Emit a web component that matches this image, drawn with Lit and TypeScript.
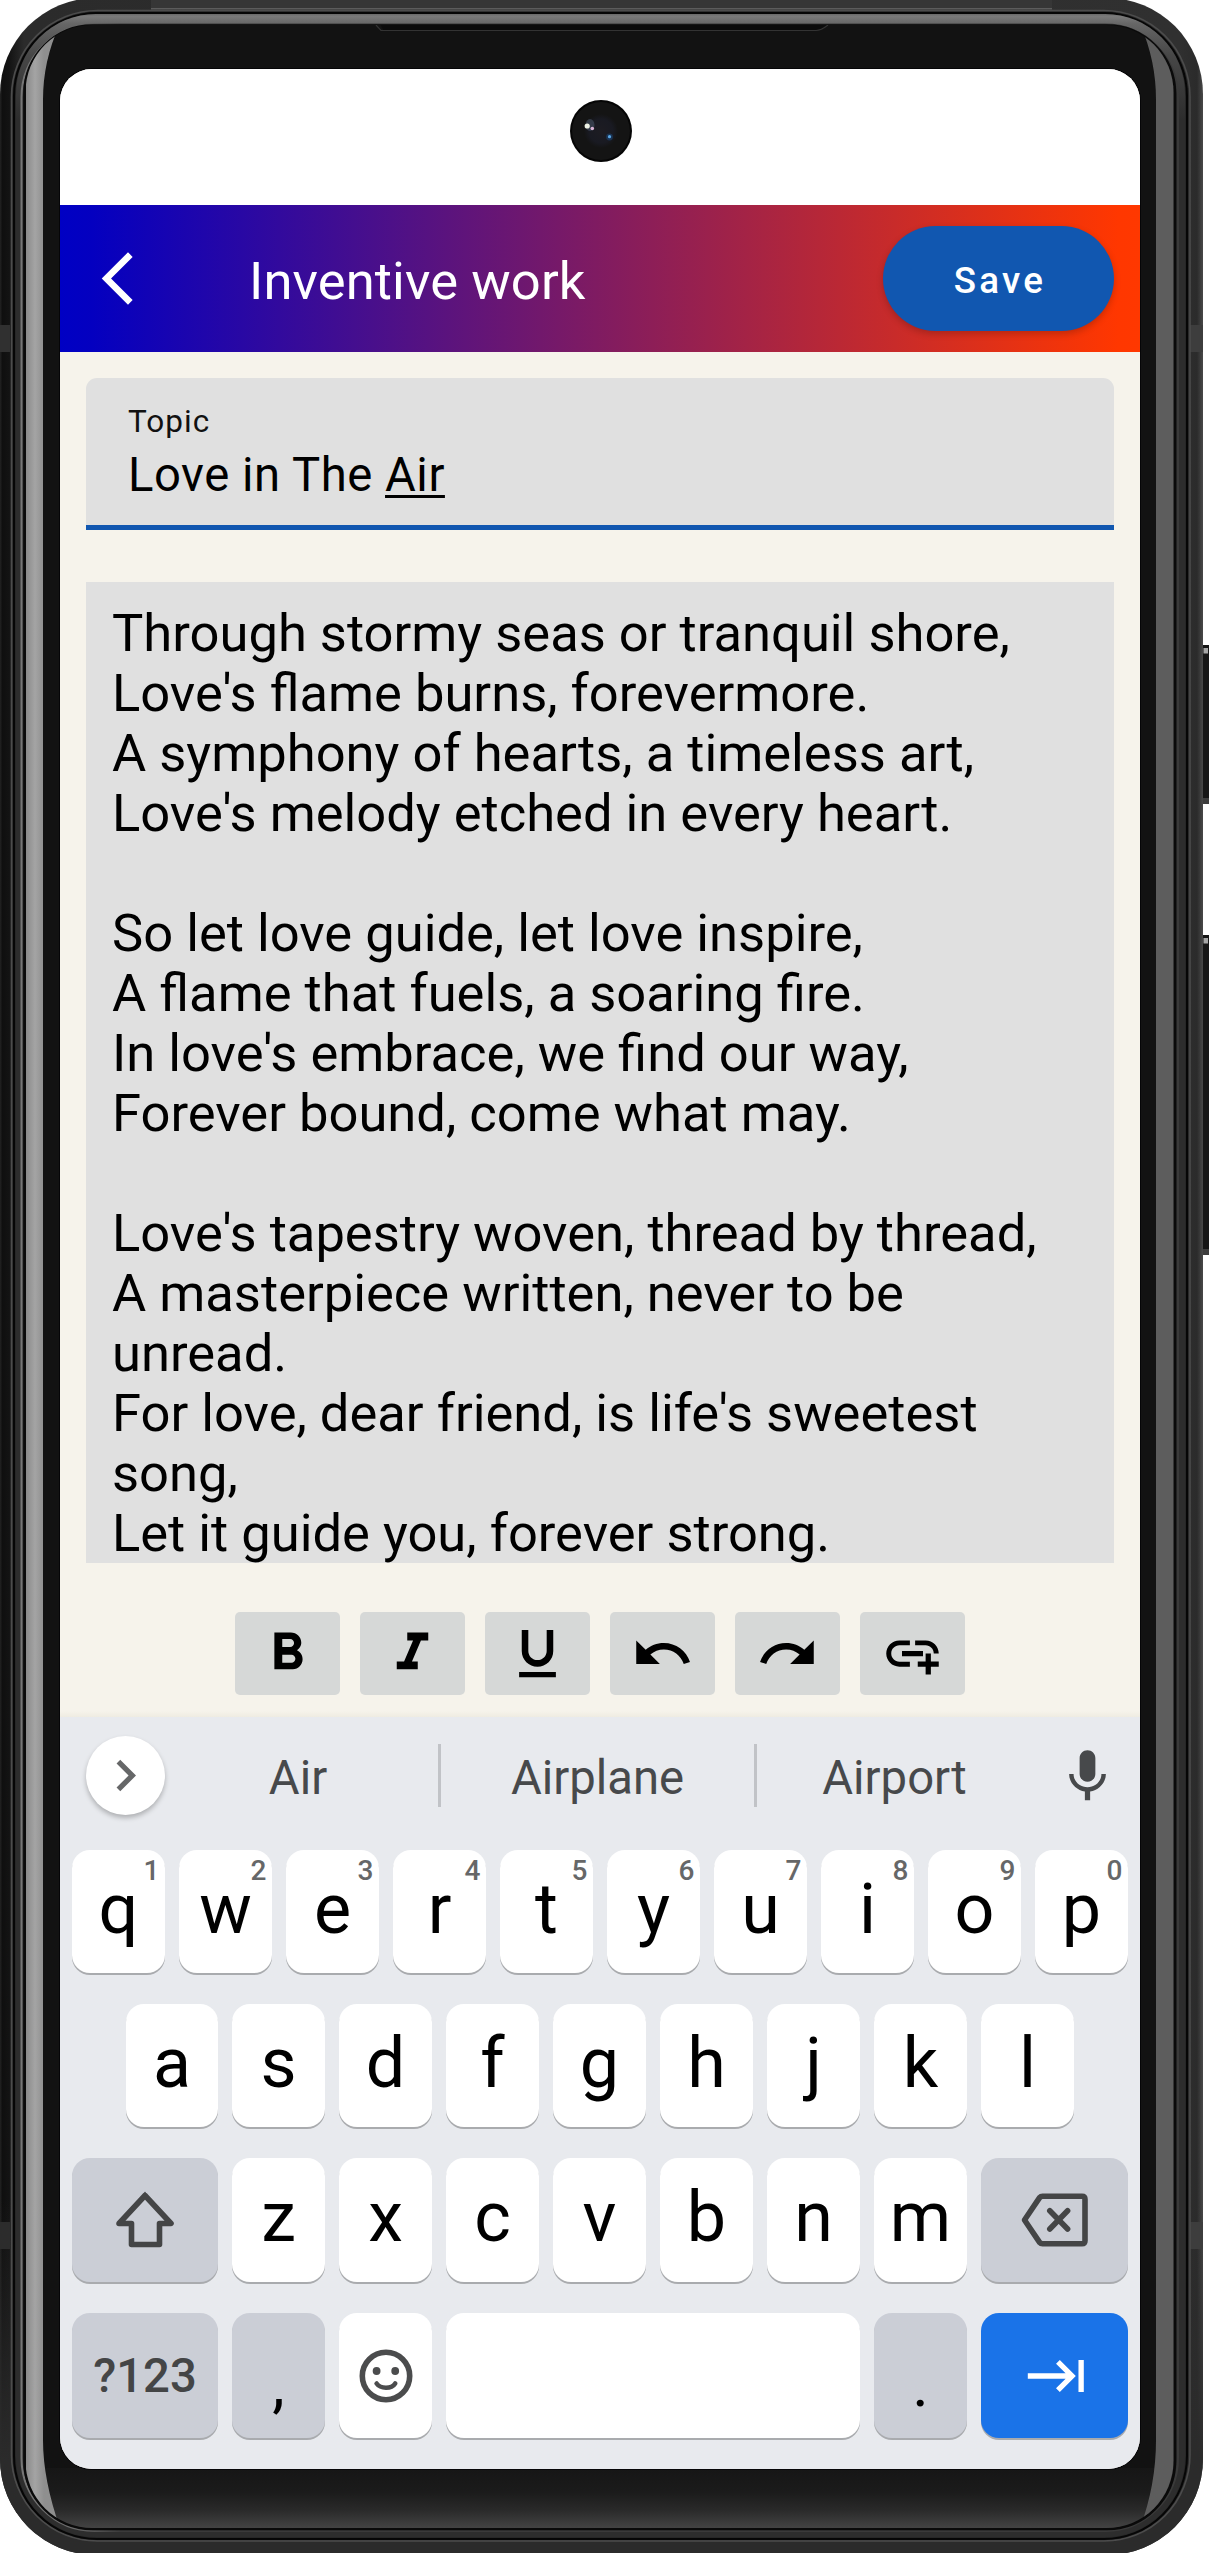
import { LitElement, html, css, svg } from "lit";
import { customElement, property } from "lit/decorators.js";
import { classMap } from "lit/directives/class-map.js";

const POEM = [
  "Through stormy seas or tranquil shore,",
  "Love's flame burns, forevermore.",
  "A symphony of hearts, a timeless art,",
  "Love's melody etched in every heart.",
  "",
  "So let love guide, let love inspire,",
  "A flame that fuels, a soaring fire.",
  "In love's embrace, we find our way,",
  "Forever bound, come what may.",
  "",
  "Love's tapestry woven, thread by thread,",
  "A masterpiece written, never to be",
  "unread.",
  "For love, dear friend, is life's sweetest",
  "song,",
  "Let it guide you, forever strong.",
];

const ICONS: Record<string, string> = {
  back: "M17.77 3.77L16 2 6 12l10 10 1.77-1.77L9.54 12z",
  chevron: "M10 6L8.59 7.41 13.17 12l-4.58 4.59L10 18l6-6z",
  bold: "M15.6 10.79c.97-.67 1.65-1.77 1.65-2.79 0-2.26-1.75-4-4-4H7v14h7.04c2.09 0 3.71-1.7 3.71-3.79 0-1.52-.86-2.82-2.15-3.42zM10 6.5h3c.83 0 1.5.67 1.5 1.5s-.67 1.5-1.5 1.5h-3v-3zm3.5 9H10v-3h3.5c.83 0 1.5.67 1.5 1.5s-.67 1.5-1.5 1.5z",
  italic: "M10 4v3h2.21l-3.42 8H6v3h8v-3h-2.21l3.42-8H18V4z",
  underline: "M12 17c3.31 0 6-2.69 6-6V3h-2.5v8c0 1.93-1.57 3.5-3.5 3.5S8.5 12.93 8.5 11V3H6v8c0 3.31 2.69 6 6 6zm-7 2v2h14v-2H5z",
  undo: "M12.5 8c-2.65 0-5.05.99-6.9 2.6L2 7v9h9l-3.62-3.62c1.39-1.16 3.16-1.88 5.12-1.88 3.54 0 6.55 2.31 7.6 5.5l2.37-.78C21.08 11.03 17.15 8 12.5 8z",
  redo: "M18.4 10.6C16.55 8.99 14.15 8 11.5 8c-4.65 0-8.58 3.03-9.96 7.22L3.9 16c1.05-3.19 4.05-5.5 7.6-5.5 1.95 0 3.73.72 5.12 1.88L13 16h9V7l-3.6 3.6z",
  link: "M8 11h8v2H8zm12.1 1H22c0-2.76-2.24-5-5-5h-4v1.9h4c1.71 0 3.1 1.39 3.1 3.1zM3.9 12c0-1.71 1.39-3.1 3.1-3.1h4V7H7c-2.76 0-5 2.24-5 5s2.24 5 5 5h4v-1.9H7c-1.71 0-3.1-1.39-3.1-3.1zM19 12h-2v3h-3v2h3v3h2v-3h3v-2h-3z",
  mic: "M12 14c1.66 0 2.99-1.34 2.99-3L15 5c0-1.66-1.34-3-3-3S9 3.34 9 5v6c0 1.66 1.34 3 3 3zm5.3-3c0 3-2.54 5.1-5.3 5.1S6.7 14 6.7 11H5c0 3.41 2.72 6.23 6 6.72V21h2v-3.28c3.28-.48 6-3.3 6-6.72h-1.7z",
  tab: "M11.59 7.41L15.17 11H1v2h14.17l-3.59 3.59L13 18l6-6-6-6-1.41 1.41zM20 6v12h2V6h-2z",
};

const icon = (name: string) =>
  html`<svg class="icon" viewBox="0 0 24 24" width="63" height="63"><path fill="currentColor" d=${ICONS[name]} /></svg>`;

const tabIcon = html`<svg width="66" height="64" viewBox="-1 0 24.4 24"><path fill="currentColor" d=${ICONS.tab} /></svg>`;

const shiftIcon = html`<svg width="60" height="58" viewBox="0 0 60 58">
  <path d="M30 4.5L56 32.5H44.5V53.5H16.5V32.5H4Z" fill="none" stroke="#444546" stroke-width="5.6" stroke-linejoin="round" />
  <path d="M26 6.5L30 .6L34 6.5Z" fill="#444546" />
</svg>`;

const deleteIcon = html`<svg width="68" height="54" viewBox="0 0 68 54">
  <g fill="none" stroke="#444546" stroke-width="5.6" stroke-linejoin="round" stroke-linecap="round">
    <path d="M3.5 27L18.6 4.6Q19.8 3.2 21.5 3.2H61Q64 3.2 64 6.2V47.8Q64 50.8 61 50.8H21.5Q19.8 50.8 18.6 49.4Z" />
    <path d="M28.8 17.8L46.6 36M46.6 17.8L28.8 36" />
  </g>
</svg>`;

const smileIcon = html`<svg width="54" height="54" viewBox="0 0 54 54">
  <circle cx="27" cy="27" r="23.7" fill="none" stroke="#4b4c4d" stroke-width="5.6" />
  <circle cx="17.6" cy="22" r="3.9" fill="#4b4c4d" />
  <circle cx="36.2" cy="22" r="3.9" fill="#4b4c4d" />
  <path d="M17.6 34.5Q20.6 38.7 27 38.7T36.2 34.5" fill="none" stroke="#4b4c4d" stroke-width="4.6" stroke-linecap="round" />
</svg>`;

/** Rounded rectangle given by its edges, as path data. */
const rr = (l: number, t: number, r: number, b: number, k: number) =>
  `M${l + k} ${t}H${r - k}A${k} ${k} 0 0 1 ${r} ${t + k}V${b - k}A${k} ${k} 0 0 1 ${r - k} ${b}H${l + k}A${k} ${k} 0 0 1 ${l} ${b - k}V${t + k}A${k} ${k} 0 0 1 ${l + k} ${t}Z`;

@customElement("phone-shell")
class PhoneShell extends LitElement {
  static styles = css`
    :host { display: block; width: 1209px; height: 2553px; }
    .art { display: block; }
  `;

  render() {
    return html`<svg class="art" width="1209" height="2553" viewBox="0 0 1209 2553">
      <defs>
        <linearGradient id="body" x1="0" x2="1203" y1="0" y2="0" gradientUnits="userSpaceOnUse">
          <stop offset="0" stop-color="#232323" /><stop offset=".002" stop-color="#0f0f0f" />
          <stop offset=".0075" stop-color="#131313" /><stop offset=".02" stop-color="#2b2b2b" />
          <stop offset=".98" stop-color="#303030" /><stop offset=".995" stop-color="#2b2b2b" />
          <stop offset="1" stop-color="#484848" />
        </linearGradient>
        <linearGradient id="bottomBody" x1="0" x2="0" y1="2200" y2="2460" gradientUnits="userSpaceOnUse">
          <stop offset="0" stop-color="#2b2b2b" stop-opacity="0" /><stop offset="1" stop-color="#2b2b2b" />
        </linearGradient>
        <linearGradient id="topBand" x1="0" x2="0" y1="12" y2="120" gradientUnits="userSpaceOnUse">
          <stop offset="0" stop-color="#5a5a5a" /><stop offset=".04" stop-color="#7a7a7a" />
          <stop offset=".11" stop-color="#666666" /><stop offset=".4" stop-color="#474747" /><stop offset="1" stop-color="#2d2d2d" />
        </linearGradient>
        <linearGradient id="chin" x1="0" x2="0" y1="2469" y2="2528" gradientUnits="userSpaceOnUse">
          <stop offset="0" stop-color="#161616" /><stop offset=".4" stop-color="#1b1b1b" />
          <stop offset=".7" stop-color="#2a2a2a" /><stop offset="1" stop-color="#434343" />
        </linearGradient>
        <linearGradient id="glareL" x1="26" x2="44" y1="0" y2="0" gradientUnits="userSpaceOnUse">
          <stop offset="0" stop-color="#8a8a8a" /><stop offset=".5" stop-color="#a4a4a4" /><stop offset="1" stop-color="#8f8f8f" />
        </linearGradient>
        <linearGradient id="rimFade" x1="0" x2="1203" y1="0" y2="0" gradientUnits="userSpaceOnUse">
          <stop offset="0" stop-color="#7c7c7c" /><stop offset=".06" stop-color="#6a6a6a" />
          <stop offset=".1" stop-color="#3a3a3a" /><stop offset="1" stop-color="#3a3a3a" />
        </linearGradient>
        <clipPath id="glass"><path d=${rr(25.5, 25, 1173.5, 2528, 67)} /></clipPath>
      </defs>
      ${svg`
        <rect x="1200" y="645" width="12" height="159" rx="2" fill="#161616" />
        <rect x="1203.5" y="648" width="4.5" height="5.5" fill="#a5a5a5" />
        <rect x="1202" y="798" width="7" height="6" fill="#3d3d3d" />
        <rect x="1200" y="935" width="12" height="320" rx="2" fill="#161616" />
        <rect x="1203.5" y="938" width="4.5" height="5.5" fill="#a5a5a5" />
        <rect x="1202" y="1249" width="7" height="6" fill="#3d3d3d" />
        <path d=${rr(0, -2, 1203, 2555, 96)} fill="url(#body)" />
        <path d=${rr(0, -2, 1203, 2555, 96)} fill="url(#bottomBody)" />
        <rect x="151" y="0" width="901" height="9" fill="#363636" />
        <rect x="151" y="8" width="901" height="1.5" fill="#5c5c5c" />
        <rect x="0" y="325" width="10" height="27" fill="#303030" />
        <rect x="0" y="2222" width="10" height="27" fill="#2c2c2c" />
        <rect x="1189" y="325" width="14" height="27" fill="#3d3d3d" />
        <rect x="1189" y="2222" width="14" height="27" fill="#3d3d3d" />
        <path d=${rr(11.5, 10.5, 1190, 2541, 86)} fill="#2a2a2a" stroke="#4c4c4c" stroke-width="1.6" />
        <path d=${rr(14, 13, 1187, 2539, 83)} fill="#272727" stroke="#060606" stroke-width="2" />
        <path d=${rr(16, 14, 1185, 2537, 80)} fill="url(#topBand)" />
        <path d=${rr(21.5, 24.5, 1178, 2531, 73)} fill="#2b2b2b" stroke="url(#rimFade)" stroke-width="2" />
        <path d=${rr(24.5, 25.5, 1175, 2529, 68)} fill="#131313" stroke="#0a0a0a" stroke-width="2.5" />
        <g clip-path="url(#glass)">
          <rect x="26" y="24" width="1148" height="2445" fill="#121212" />
          <rect x="26" y="2468" width="1148" height="60" fill="url(#chin)" />
          <path d="M26 24H60Q43 60 43 100V2440Q43 2480 60 2528H26Z" fill="url(#glareL)" />
          <path d="M1174 24H1140Q1156 60 1156 100V2440Q1156 2485 1140 2528H1174Z" fill="#5d5d5d" />
          <path d="M370 24H380L384 31H816Q822 31 828 24Z" fill="#0b0b0b" />
          <path d="M376 25L381 30.5H816Q821 30.5 828 25" fill="none" stroke="#333333" stroke-width="1.2" />
        </g>
        <path d=${rr(59, 68, 1141, 2470, 33)} fill="#050507" />
      `}
    </svg>`;
  }
}

@customElement("kb-key")
class KbKey extends LitElement {
  @property() label = "";
  @property() hint = "";
  @property() kind = "";

  static styles = css`
    :host { display: block; min-width: 0; }
    .cap {
      box-sizing: border-box;
      display: flex;
      justify-content: center;
      align-items: center;
      position: relative;
      height: 100%;
      border-radius: 18px;
      background: #ffffff;
      box-shadow: 0 2px 0 #a9abae;
      color: #000;
      font: 400 70px/82px Roboto, sans-serif;
    }
    .letter { align-items: flex-start; padding-top: 18px; }
    .soft { background: #cbced6; }
    .punct { align-items: flex-start; padding-top: 31px; font-size: 63px; }
    .mode { font-size: 47.25px; font-weight: 500; color: #444546; }
    .go { background: #1a73e8; color: #fff; }
    .hint {
      position: absolute;
      top: 5px;
      right: 0;
      width: 27px;
      text-align: center;
      font-size: 28px;
      line-height: 32px;
      font-weight: 500;
      color: #666768;
    }
    ::slotted(svg) { display: block; }
  `;

  render() {
    const k = this.kind;
    const classes = {
      cap: true,
      letter: k === "",
      soft: k === "soft" || k === "punct" || k === "mode",
      punct: k === "punct",
      mode: k === "mode",
      go: k === "go",
    };
    return html`<div class=${classMap(classes)}>
      ${this.label ? html`<span>${this.label}</span>` : html`<slot></slot>`}
      ${this.hint ? html`<span class="hint">${this.hint}</span>` : ""}
    </div>`;
  }
}

@customElement("app-root")
class AppRoot extends LitElement {
  static styles = css`
    :host {
      display: block;
      width: 1209px;
      height: 2553px;
      background: #fff;
      font-family: Roboto, sans-serif;
    }
    .stage { display: grid; width: 1209px; height: 2553px; overflow: hidden; }
    .stage > * { grid-area: 1 / 1; }
    .screen {
      margin: 69px 0 0 60px;
      width: 1080px;
      height: 2400px;
      border-radius: 32px;
      overflow: hidden;
      display: flex;
      flex-direction: column;
      background: #f6f3eb;
    }
    .icon { display: block; flex: none; }
    .status { height: 136px; flex: none; background: #fff; display: flex; justify-content: center; align-items: flex-start; }
    .camera { margin-top: 31px; margin-left: 1px; }
    .header {
      height: 147px;
      flex: none;
      box-sizing: border-box;
      display: flex;
      align-items: center;
      padding: 0 26px;
      color: #fff;
      background: linear-gradient(90deg, #0000c4 0%, #0400c0 3%, #ff3700 98%, #ff3800 100%);
    }
    .title { margin: 5px 0 0 100px; font-size: 52.5px; line-height: 62px; letter-spacing: 0.12px; flex: 1; white-space: nowrap; }
    .save {
      box-sizing: border-box;
      width: 231px;
      height: 105px;
      border: 0;
      border-radius: 53px;
      padding: 4px 0 0 3px;
      background: #1157b0;
      color: #fff;
      font: 500 36.75px/44px Roboto, sans-serif;
      letter-spacing: 3.28px;
      box-shadow: 0 3px 7px rgba(0, 0, 0, 0.2);
    }
    .content { flex: none; height: 1365px; box-sizing: border-box; padding: 26px 26px 0; display: flex; flex-direction: column; background: linear-gradient(180deg, #f6f3eb 1359px, #efece2 1365px); }
    .field {
      box-sizing: border-box;
      height: 152px;
      padding: 25px 42px 0;
      border-radius: 11px 11px 0 0;
      border-bottom: 5px solid #1157b0;
      background: #e0e0e0;
      color: #000;
    }
    .caption { font-size: 31.5px; line-height: 38px; letter-spacing: 1.05px; color: #111; }
    .value { margin-top: 6px; font-size: 47.25px; line-height: 56px; letter-spacing: 0.52px; white-space: nowrap; }
    .composing { text-decoration: underline; text-decoration-thickness: 2.5px; text-underline-offset: 4px; text-decoration-skip-ink: none; }
    .note {
      box-sizing: border-box;
      margin-top: 52px;
      height: 981px;
      padding: 21px 26px 0;
      background: #e0e0e0;
      color: #000;
      font-size: 52.5px;
      line-height: 60px;
      overflow: hidden;
    }
    .line { height: 60px; white-space: pre; }
    .tools { margin-top: 49px; display: flex; justify-content: center; gap: 20px; }
    .tool {
      width: 105px;
      height: 83px;
      padding: 0;
      border: 0;
      border-radius: 5px;
      background: #d6d8d7;
      color: #000;
      display: flex;
      align-items: center;
      justify-content: center;
    }
    .keyboard { flex: 1; background: #e8eaee; display: flex; flex-direction: column; }
    .suggest { height: 133px; flex: none; display: grid; grid-template-columns: 378px 3px 313px 3px 275px 63px; align-items: start; color: #47494b; font-size: 47.25px; line-height: 56px; }
    .first { display: grid; grid-template-columns: 79px 1fr; padding-left: 26px; }
    .more {
      width: 79px;
      height: 79px;
      margin-top: 19px;
      border-radius: 50%;
      background: #fff;
      color: #666768;
      display: flex;
      align-items: center;
      justify-content: center;
      box-shadow: 0 3px 5px rgba(0, 0, 0, 0.25);
    }
    .word { text-align: center; margin-top: 33px; }
    .first .word { padding-right: 7px; }
    .rule { height: 63px; margin-top: 27px; background: #c1c3c7; }
    .mic { margin-top: 28px; margin-left: 24px; }
    .rows { display: grid; grid-template-rows: 123px 123px 124px 125px; row-gap: 31px; padding: 0 12px; }
    .row { display: flex; gap: 14px; }
    .row > * { flex: none; width: 93px; }
    .row > .indent { width: 92px; margin-left: 54px; }
    .row > .wide { width: 146px; }
    .row > .wide:last-child { width: 147px; }
    .row > .space { flex: 1; }
  `;

  private keys(text: string) {
    return [...text].map((c) => html`<kb-key label=${c}></kb-key>`);
  }

  render() {
    return html`<div class="stage">
      <phone-shell></phone-shell>
      <main class="screen">
        <div class="status">
          <svg class="camera" width="62" height="62" viewBox="0 0 62 62">
            <defs>
              <radialGradient id="lens" cx=".5" cy=".5" r=".5">
                <stop offset="0" stop-color="#1d1c22" /><stop offset=".7" stop-color="#191a22" /><stop offset="1" stop-color="#141414" />
              </radialGradient>
            </defs>
            <circle cx="31" cy="31" r="31" fill="#050505" />
            <circle cx="31" cy="31" r="29" fill="#141414" />
            <circle cx="31" cy="31" r="17" fill="url(#lens)" />
            <ellipse cx="20" cy="25" rx="4.5" ry="6" fill="#56657c" opacity=".45" />
            <circle cx="17.2" cy="26" r="2.6" fill="#eef3e6" />
            <circle cx="22.3" cy="28.5" r="1.8" fill="#d9b4d6" />
            <circle cx="39.5" cy="37" r="3.4" fill="#1c3f66" opacity=".7" />
            <circle cx="39.5" cy="36.7" r="1.6" fill="#5aa8e8" />
          </svg>
        </div>
        <header class="header">
          ${icon("back")}
          <div class="title">Inventive work</div>
          <button class="save">Save</button>
        </header>
        <section class="content">
          <div class="field">
            <div class="caption">Topic</div>
            <div class="value">Love in The <span class="composing">Air</span></div>
          </div>
          <div class="note">${POEM.map((l) => html`<div class="line">${l}</div>`)}</div>
          <div class="tools">
            ${["bold", "italic", "underline", "undo", "redo", "link"].map((n) => html`<button class="tool">${icon(n)}</button>`)}
          </div>
        </section>
        <section class="keyboard">
          <div class="suggest">
            <div class="first">
              <div class="more">${icon("chevron")}</div>
              <div class="word">Air</div>
            </div>
            <div class="rule"></div>
            <div class="word">Airplane</div>
            <div class="rule"></div>
            <div class="word">Airport</div>
            <div class="mic">${icon("mic")}</div>
          </div>
          <div class="rows">
            <div class="row">
              ${[..."qwertyuiop"].map((c, i) => html`<kb-key label=${c} hint=${String((i + 1) % 10)}></kb-key>`)}
            </div>
            <div class="row">
              <kb-key class="indent" label="a"></kb-key>
              ${this.keys("sdfghjkl")}
            </div>
            <div class="row">
              <kb-key class="wide" kind="soft">${shiftIcon}</kb-key>
              ${this.keys("zxcvbnm")}
              <kb-key class="wide" kind="soft">${deleteIcon}</kb-key>
            </div>
            <div class="row">
              <kb-key class="wide" kind="mode" label="?123"></kb-key>
              <kb-key kind="punct" label=","></kb-key>
              <kb-key kind="plain">${smileIcon}</kb-key>
              <kb-key class="space" kind="plain"></kb-key>
              <kb-key kind="punct" label="."></kb-key>
              <kb-key class="wide" kind="go">${tabIcon}</kb-key>
            </div>
          </div>
        </section>
      </main>
    </div>`;
  }
}
